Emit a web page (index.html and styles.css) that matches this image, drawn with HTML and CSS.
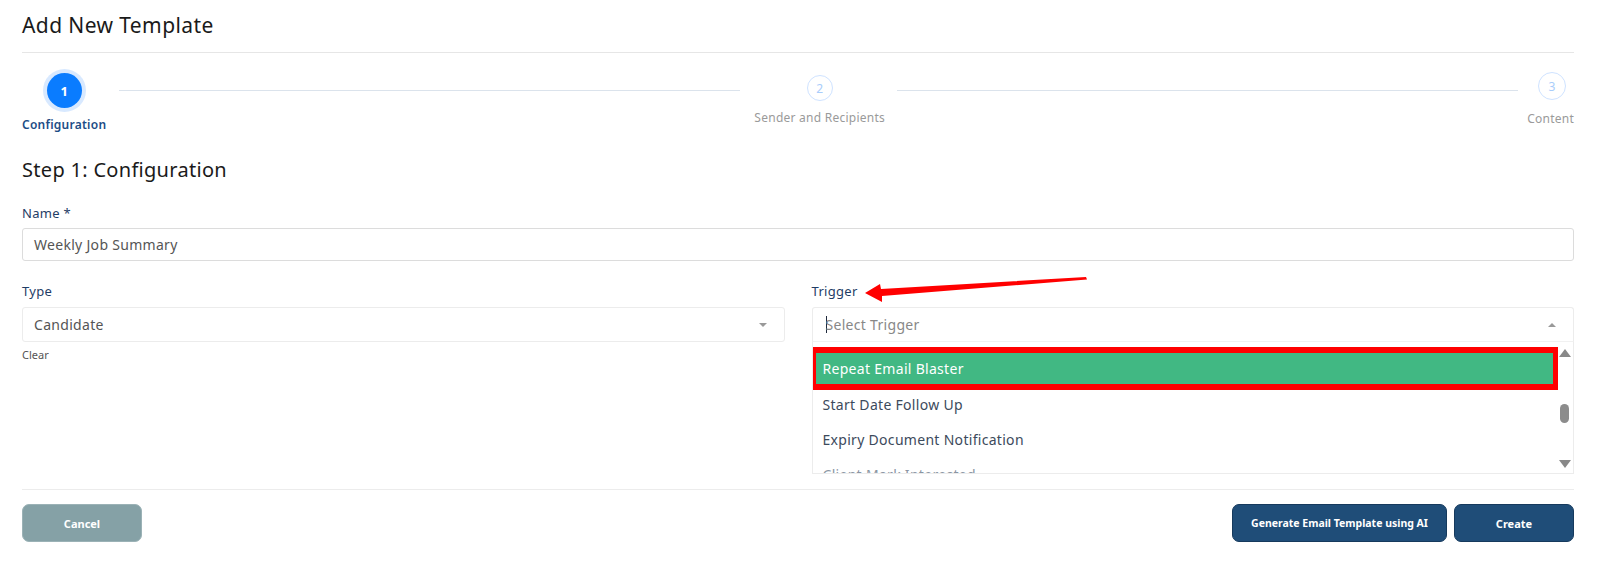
FILE: index.html
```html
<!DOCTYPE HTML>
<html lang="en">
  <head>
    <meta charset="UTF-8">
    <title>Add New Template</title>
    <link rel="stylesheet" href="styles.css">
  </head>
  <body>
    <div class="contenedor">
        <h1 class="titulo">Add New Template</h1>
        <hr class="linea">

        <div class="pasos">
            <div class="paso paso-activo">
                <div class="circulo">1</div>
                <div class="etiqueta">Configuration</div>
            </div>
            <div class="conector"></div>
            <div class="paso paso-medio">
                <div class="circulo">2</div>
                <div class="etiqueta">Sender and Recipients</div>
            </div>
            <div class="conector"></div>
            <div class="paso paso-final">
                <div class="circulo">3</div>
                <div class="etiqueta">Content</div>
            </div>
        </div>

        <h2 class="subtitulo">Step 1: Configuration</h2>

        <div class="campo">
            <label class="rotulo">Name *</label>
            <div class="entrada">Weekly Job Summary</div>
        </div>

        <div class="fila">
            <div class="campo columna">
                <label class="rotulo">Type</label>
                <div class="entrada selector">
                    <span>Candidate</span>
                    <span class="flecha flecha-abajo"></span>
                </div>
                <div class="limpiar">Clear</div>
            </div>
            <div class="campo columna">
                <label class="rotulo">Trigger</label>
                <div class="entrada selector abierto">
                    <span class="placeholder"><span class="cursor"></span>Select Trigger</span>
                    <span class="flecha flecha-arriba"></span>
                </div>
                <div class="lista">
                    <div class="opciones">
                        <div class="opcion opcion-activa">Repeat Email Blaster</div>
                        <div class="opcion">Start Date Follow Up</div>
                        <div class="opcion">Expiry Document Notification</div>
                        <div class="opcion opcion-cortada">Client Mark Interested</div>
                    </div>
                    <div class="scroll">
                        <span class="scroll-arriba"></span>
                        <span class="scroll-barra"></span>
                        <span class="scroll-abajo"></span>
                    </div>
                </div>
                <svg class="anotacion" width="224" height="26" viewBox="0 0 224 26">
                    <polygon points="0,16 15,7 16,12 221,0 222,2.5 17,19 17,25" fill="#ff0000"/>
                </svg>
            </div>
        </div>

        <hr class="linea linea-pie">

        <div class="acciones">
            <button class="boton boton-cancelar">Cancel</button>
            <div class="acciones-derecha">
                <button class="boton boton-ia">Generate Email Template using AI</button>
                <button class="boton boton-crear">Create</button>
            </div>
        </div>
    </div>
  </body>
</html>
```

FILE: styles.css
```css
html, body {
    padding: 0;
    margin: 0;
    border: 0;
    background: #fff;
    overflow: hidden;
}

* {
    box-sizing: border-box;
}

body {
    font-family: "Noto Sans", "Open Sans", sans-serif;
    color: #222;
}

.contenedor {
    padding: 11px 26px 0 22px;
}

.titulo {
    margin: 0;
    font-size: 21px;
    font-weight: 400;
    letter-spacing: 0.4px;
    line-height: 28px;
    color: #1a1a1a;
}

.linea {
    margin: 13px 0 0 0;
    border: 0;
    border-top: 1px solid #e6e6e6;
}

/*** Stepper ***/

.pasos {
    display: flex;
    align-items: flex-start;
    margin-top: 20px;
}

.paso {
    display: flex;
    flex-direction: column;
    align-items: center;
}

.circulo {
    display: flex;
    align-items: center;
    justify-content: center;
    border-radius: 50%;
    font-size: 13px;
}

.etiqueta {
    font-size: 12px;
    line-height: 16px;
    letter-spacing: 0.25px;
}

.paso-activo .circulo {
    width: 35px;
    height: 35px;
    background: #0a7cff;
    color: #fff;
    font-weight: bold;
    box-shadow: 0 0 0 4px #d8e9ff;
}

.paso-activo .etiqueta {
    margin-top: 9px;
    font-weight: 600;
    color: #1c4d86;
}

.paso-medio {
    margin-top: 2px;
}

.paso-final {
    margin-top: -1px;
    align-items: flex-end;
}

.paso-medio .circulo {
    width: 26px;
    height: 26px;
}

.paso-final .circulo {
    width: 28px;
    height: 28px;
    margin-right: 8px;
}

.paso-medio .circulo, .paso-final .circulo {
    border: 1px solid #cfe3ff;
    color: #a9cdfb;
    font-size: 12px;
}

.paso-medio .etiqueta {
    margin-top: 9px;
    color: #9a9a9a;
}

.paso-final .etiqueta {
    margin-top: 11px;
    color: #9a9a9a;
}

.conector {
    flex: 1;
    height: 1px;
    background: #dbe3ec;
    margin-top: 17px;
}

.paso-activo + .conector {
    margin-left: 13px;
    margin-right: 14px;
}

.paso-medio + .conector {
    margin-left: 12px;
    margin-right: 9px;
}

/*** Form ***/

.subtitulo {
    margin: 24px 0 0 0;
    font-size: 20px;
    font-weight: 400;
    letter-spacing: 0.3px;
    line-height: 26px;
    color: #1a1a1a;
}

.campo {
    margin-top: 21px;
    position: relative;
}

.rotulo {
    display: block;
    font-size: 13px;
    line-height: 18px;
    letter-spacing: 0.3px;
    color: #1f3d66;
    margin-bottom: 6px;
}

.entrada {
    height: 33px;
    border: 1px solid #dcdcdc;
    border-radius: 3px;
    padding: 0 11px;
    display: flex;
    align-items: center;
    font-size: 14px;
    letter-spacing: 0.3px;
    color: #555;
}

.fila {
    display: flex;
    gap: 27px;
    margin-top: 2px;
}

.columna {
    flex: 1;
    margin-top: 19px;
}

.columna .rotulo {
    margin-bottom: 7px;
}

.selector {
    justify-content: space-between;
    border-color: #ececec;
    height: 35px;
}

.flecha {
    width: 0;
    height: 0;
    border-left: 4px solid transparent;
    border-right: 4px solid transparent;
    margin-right: 6px;
}

.flecha-abajo {
    border-top: 4px solid #999;
}

.flecha-arriba {
    border-bottom: 4px solid #999;
}

.placeholder {
    color: #888;
    display: flex;
    align-items: center;
}

.cursor {
    display: inline-block;
    width: 1px;
    height: 17px;
    background: #1f2a3c;
    margin-left: 2px;
    margin-right: -1px;
}

.abierto {
    border-radius: 3px 3px 0 0;
    border-bottom-color: #f1f1f1;
}

.limpiar {
    font-size: 11px;
    color: #555;
    margin-top: 5px;
}

.lista {
    position: absolute;
    top: 60px;
    left: 0;
    right: 0;
    height: 132px;
    border: 1px solid #ececec;
    border-top: 0;
    background: #fff;
    display: flex;
    overflow: hidden;
}

.opciones {
    flex: 1;
    padding-top: 8px;
}

.opcion {
    height: 35px;
    display: flex;
    align-items: center;
    padding: 0 10px;
    font-size: 14px;
    letter-spacing: 0.3px;
    color: #3c4a5c;
    white-space: nowrap;
}

.opcion-activa {
    height: 31px;
    margin: 3px 5px 3px 3px;
    padding-left: 7px;
    background: #41b883;
    color: #fff;
    outline: 6px solid #ff0000;
}

.opcion-cortada {
    color: #8a95a3;
}

.scroll {
    width: 15px;
    position: relative;
    background: #fff;
}

.scroll-arriba, .scroll-abajo {
    position: absolute;
    left: 1px;
    width: 0;
    height: 0;
    border-left: 6px solid transparent;
    border-right: 6px solid transparent;
}

.scroll-arriba {
    top: 7px;
    border-bottom: 8px solid #888;
}

.scroll-abajo {
    bottom: 5px;
    border-top: 8px solid #888;
}

.scroll-barra {
    position: absolute;
    left: 2px;
    top: 62px;
    width: 9px;
    height: 19px;
    border-radius: 5px;
    background: #8c8c8c;
}

.anotacion {
    position: absolute;
    left: 53px;
    top: -5px;
}

.linea-pie {
    margin-top: 127px;
    border-top-color: #ececec;
}

/*** Buttons ***/

.acciones {
    display: flex;
    justify-content: space-between;
    margin-top: 14px;
}

.acciones-derecha {
    display: flex;
    gap: 7px;
}

.boton {
    height: 38px;
    border: 1px solid transparent;
    border-radius: 7px;
    color: #fff;
    font-family: "Noto Sans", sans-serif;
    font-size: 11px;
    font-weight: bold;
    cursor: pointer;
}

.boton-cancelar {
    width: 120px;
    background-color: #85a1a6;
    border-color: #9bb2b6;
}

.boton-ia {
    width: 215px;
    font-size: 10.5px;
    background-color: #1f4d78;
    border-color: #163a5d;
}

.boton-crear {
    width: 120px;
    background-color: #1f4d78;
    border-color: #163a5d;
}
```
